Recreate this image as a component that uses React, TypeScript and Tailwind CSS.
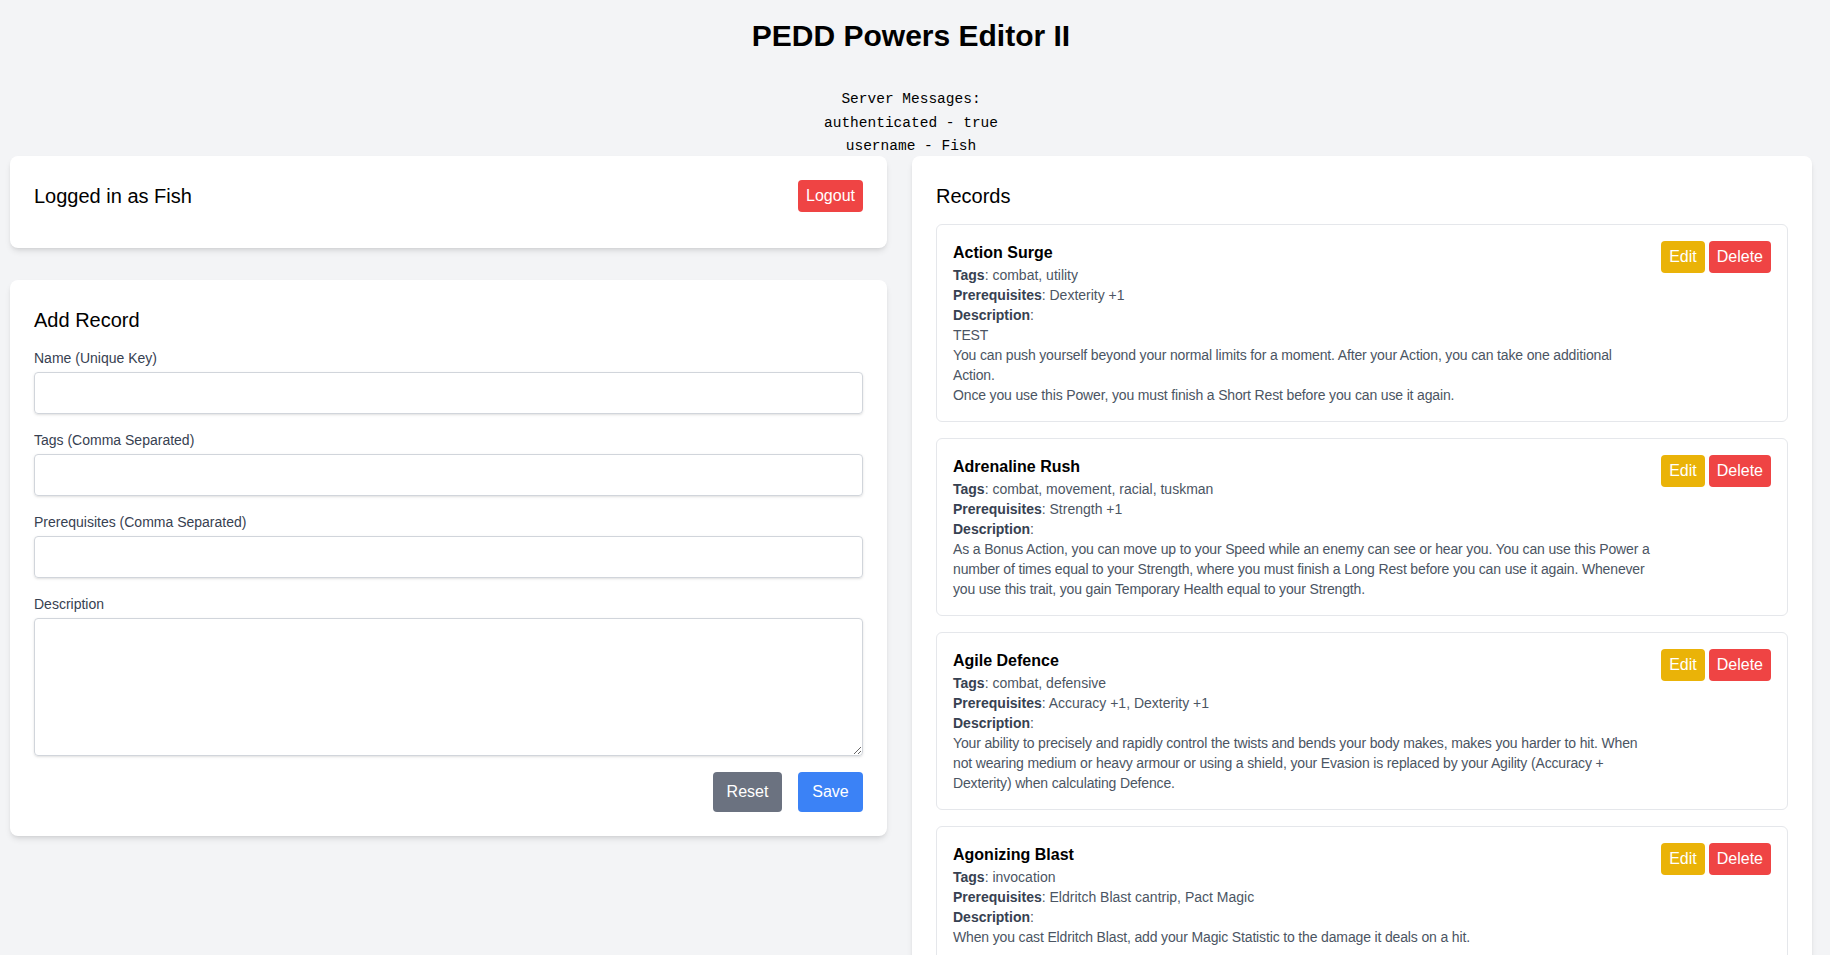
import { useState } from "react";

/* ---------------------------------- Types --------------------------------- */
type PowerRecord = {
  name: string;
  tags: string[];
  prerequisites: string[];
  description: string;
};

/* ---------------------------------- Data ---------------------------------- */
const records: PowerRecord[] = [
  {
    name: "Action Surge",
    tags: ["combat", "utility"],
    prerequisites: ["Dexterity +1"],
    description:
      "TEST\nYou can push yourself beyond your normal limits for a moment. After your Action, you can take one additional Action.\nOnce you use this Power, you must finish a Short Rest before you can use it again.",
  },
  {
    name: "Adrenaline Rush",
    tags: ["combat", "movement", "racial", "tuskman"],
    prerequisites: ["Strength +1"],
    description:
      "As a Bonus Action, you can move up to your Speed while an enemy can see or hear you. You can use this Power a number of times equal to your Strength, where you must finish a Long Rest before you can use it again. Whenever you use this trait, you gain Temporary Health equal to your Strength.",
  },
  {
    name: "Agile Defence",
    tags: ["combat", "defensive"],
    prerequisites: ["Accuracy +1", "Dexterity +1"],
    description:
      "Your ability to precisely and rapidly control the twists and bends your body makes, makes you harder to hit. When not wearing medium or heavy armour or using a shield, your Evasion is replaced by your Agility (Accuracy + Dexterity) when calculating Defence.",
  },
  {
    name: "Agonizing Blast",
    tags: ["invocation"],
    prerequisites: ["Eldritch Blast cantrip", "Pact Magic"],
    description: "When you cast Eldritch Blast, add your Magic Statistic to the damage it deals on a hit.",
  },
];

const fields = [
  { key: "name", label: "Name (Unique Key)" },
  { key: "tags", label: "Tags (Comma Separated)" },
  { key: "prerequisites", label: "Prerequisites (Comma Separated)" },
];

/* ------------------------------ Main Function ----------------------------- */
export default function App() {
  const [form, setForm] = useState<{ [key: string]: string }>({});

  function handleChange(key: string, val: string) {
    setForm({ ...form, [key]: val });
  }

  /* ----------------------------------- JSX ---------------------------------- */
  return (
    <div className="h-screen overflow-hidden bg-[#f3f4f6] font-['Liberation_Sans',Arial,sans-serif] text-black">
      <div className="w-[1822px]">
        <h1 className="pt-[18px] text-center text-3xl font-bold">PEDD Powers Editor II</h1>
        <pre className="mt-[34px] text-center font-['Liberation_Mono','Courier_New',monospace] text-[14.5px] leading-[23.5px]">
          {"Server Messages:\nauthenticated - true\nusername - Fish"}
        </pre>

        <div className="-mt-[3px] flex items-start gap-[25px] px-[10px]">
          {/* left column */}
          <div className="flex w-[877px] flex-col gap-8">
            <div className="rounded-lg bg-white px-6 pb-9 pt-6 shadow-md">
              <div className="flex items-center justify-between">
                <h2 className="text-xl">Logged in as Fish</h2>
                <button className="w-[65px] rounded bg-[#ef4444] py-1 text-center text-base text-white">Logout</button>
              </div>
            </div>

            <div className="rounded-lg bg-white p-6 shadow-md">
              <h2 className="mb-3 text-xl leading-8">Add Record</h2>
              {fields.map((f) => (
                <div key={f.key} className="mb-4">
                  <label className="mb-1 block text-sm text-[#374151]">{f.label}</label>
                  <input
                    className="block w-full rounded border border-[#d1d5db] px-3 py-2 text-base shadow-sm"
                    value={form[f.key] || ""}
                    onChange={(e) => handleChange(f.key, e.target.value)}
                  />
                </div>
              ))}
              <div className="mb-4">
                <label className="mb-1 block text-sm text-[#374151]">Description</label>
                <textarea
                  rows={5}
                  className="block w-full rounded border border-[#d1d5db] px-3 py-2 text-base shadow-sm"
                  value={form.description || ""}
                  onChange={(e) => handleChange("description", e.target.value)}
                />
              </div>
              <div className="flex justify-end gap-4">
                <button
                  className="w-[69px] rounded bg-[#6b7280] py-2 text-center text-base text-white"
                  onClick={() => setForm({})}
                >
                  Reset
                </button>
                <button className="w-[65px] rounded bg-[#3b82f6] py-2 text-center text-base text-white">Save</button>
              </div>
            </div>
          </div>

          {/* right column */}
          <div className="w-[900px] rounded-lg bg-white p-6 shadow-md">
            <h2 className="mb-3 text-xl leading-8">Records</h2>
            <div className="flex flex-col gap-4">
              {records.map((r) => (
                <RecordItem key={r.name} record={r} />
              ))}
            </div>
          </div>
        </div>
      </div>
    </div>
  );
}

/* ------------------------------- Record Item ------------------------------ */
function RecordItem({ record }: { record: PowerRecord }) {
  return (
    <div className="flex gap-2 rounded-md border border-[#e5e7eb] p-4">
      <div className="min-w-0 flex-1 text-sm leading-5 text-[#4b5563]">
        <h3 className="text-base font-bold leading-6 text-black">{record.name}</h3>
        <p>
          <span className="font-bold text-[#374151]">Tags</span>: {record.tags.join(", ")}
        </p>
        <p>
          <span className="font-bold text-[#374151]">Prerequisites</span>: {record.prerequisites.join(", ")}
        </p>
        <p>
          <span className="font-bold text-[#374151]">Description</span>:
        </p>
        <p className="whitespace-pre-line tracking-[-0.15px]">{record.description}</p>
      </div>
      <div className="flex shrink-0 gap-1 self-start">
        <button className="rounded bg-[#eab308] px-2 py-1 text-base text-white">Edit</button>
        <button className="rounded bg-[#ef4444] px-2 py-1 text-base text-white">Delete</button>
      </div>
    </div>
  );
}
